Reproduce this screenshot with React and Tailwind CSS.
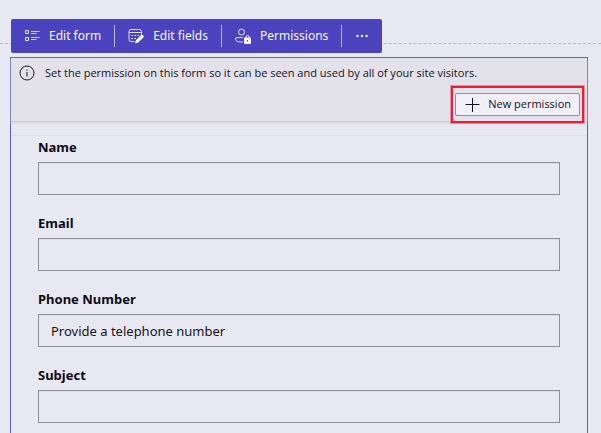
const fields = [
  { id: "name", label: "Name", type: "text", value: "" },
  { id: "email", label: "Email", type: "email", value: "" },
  { id: "phone", label: "Phone Number", type: "tel", value: "Provide a telephone number" },
  { id: "subject", label: "Subject", type: "text", value: "" },
];

function FormIcon() {
  return (
    <svg width="16" height="16" viewBox="0 0 16 16" fill="none" stroke="currentColor" aria-hidden="true">
      <rect x="1.5" y="2.5" width="3" height="3" rx="0.5" />
      <rect x="1.5" y="9.5" width="3" height="3" rx="0.5" />
      <path d="M7 3.5h8.5M7 5.5h5.5M7 9.5h8.5M7 11.500h5.5" strokeOpacity="0.75" />
    </svg>
  );
}

function FieldsIcon() {
  return (
    <svg width="16" height="16" viewBox="0 0 16 16" fill="none" stroke="currentColor" aria-hidden="true">
      <path d="M6.5 13.5H3a2 2 0 0 1-2-2v-8a2 2 0 0 1 2-2h8.5a2 2 0 0 1 2 2V7M1 4.5h12.5" strokeOpacity="0.85" />
      <path d="M3.5 7.5H5M6.5 7.5H8M9.5 7.5H11M3.5 10.5H5M6.5 10.5H8" />
      <path d="M12.6 7.5a1.6 1.6 0 0 1 2.6 2.3L10.2 14.4l-3.2 1 .9-3.1z" fill="currentColor" stroke="none" />
    </svg>
  );
}

function PermissionsIcon() {
  return (
    <svg width="16" height="16" viewBox="0 0 16 16" fill="none" stroke="currentColor" aria-hidden="true">
      <circle cx="6.5" cy="4" r="3" strokeOpacity="0.85" />
      <path d="M8 9.5H2A1.5 1.5 0 0 0 .5 11c0 2 2.5 3 5.5 3h2" strokeOpacity="0.85" />
      <path d="M11 10V9a1.5 1.5 0 0 1 3 0v1" />
      <path
        fillRule="evenodd"
        d="M10 9.5h5a1 1 0 0 1 1 1V15a1 1 0 0 1-1 1h-5a1 1 0 0 1-1-1v-4.5a1 1 0 0 1 1-1zm2 2.5v1.5h1V12z"
        fill="currentColor"
        stroke="none"
      />
    </svg>
  );
}

function InfoIcon() {
  return (
    <svg width="16" height="16" viewBox="0 0 16 16" fill="none" stroke="currentColor" aria-hidden="true">
      <circle cx="8" cy="8" r="7" />
      <path d="M8 7v4.5M8 4.5v1.2" />
    </svg>
  );
}

function ToolbarButton({ icon, children }) {
  return (
    <button type="button" className="flex h-full items-center gap-[9px] px-[13px] text-[12px] whitespace-nowrap">
      {icon}
      {children}
    </button>
  );
}

function Divider() {
  return <span className="h-[22px] w-px bg-[#b9b2d8]" />;
}

export default function App() {
  return (
    <main className="h-screen overflow-hidden bg-[#e8e8f2] pt-[19px] font-['Noto_Sans','Open_Sans',sans-serif] text-[#15131c]">
      <div className="relative mb-1 flex pl-[11px]">
        <div className="absolute inset-x-0 top-6 border-t border-dashed border-[#b9b8c3]" />
        <div role="toolbar" className="relative flex h-[34px] items-center rounded-[2px] bg-[#4b43bd] text-[#f6f5ff]">
          <ToolbarButton icon={<FormIcon />}>Edit form</ToolbarButton>
          <Divider />
          <ToolbarButton icon={<FieldsIcon />}>Edit fields</ToolbarButton>
          <Divider />
          <ToolbarButton icon={<PermissionsIcon />}>Permissions</ToolbarButton>
          <Divider />
          <button type="button" aria-label="More options" className="flex h-full items-center px-[13px]">
            <svg width="14" height="16" viewBox="0 0 14 16" fill="currentColor" aria-hidden="true">
              <circle cx="2.5" cy="8" r="1.2" />
              <circle cx="7" cy="8" r="1.2" />
              <circle cx="11.5" cy="8" r="1.2" />
            </svg>
          </button>
        </div>
      </div>

      <section className="mr-[13px] ml-[10px] h-full border border-[#6159c4]">
        <div className="border-b border-[#cbcad3] bg-[#e3e2eb] px-[7px] pt-[7px] pb-[5px] font-['Open_Sans',sans-serif] text-[11px] shadow-[0_1px_2px_#d5d4de]">
          <div className="flex items-center gap-[10px] pl-px">
            <InfoIcon />
            <p className="leading-4 whitespace-nowrap">
              Set the permission on this form so it can be seen and used by all of your site visitors.
            </p>
          </div>
          <div className="mt-3 flex justify-end">
            <div className="relative">
              <button
                type="button"
                className="flex h-[23px] items-center gap-2 rounded-[2px] border border-[#92919c] bg-[#f0effa] px-2 whitespace-nowrap"
              >
                <svg width="16" height="16" viewBox="0 0 16 16" stroke="currentColor" aria-hidden="true">
                  <path d="M1.5 7.5h14M8.5 1v14" />
                </svg>
                New permission
              </button>
              <div className="pointer-events-none absolute -inset-x-[4px] -inset-y-[7px] border-2 border-[#ee1c37] shadow-[0_0_0_1px_#ee1c3766]" />
            </div>
          </div>
        </div>

        <form className="mt-[13px] border-t border-[#e1e0e9] px-[27px] pt-px">
          {fields.map((field) => (
            <div key={field.id} className="mb-[18px]">
              <label htmlFor={field.id} className="block pb-[5px] text-[13px] leading-5 font-bold text-[#0c0a12]">
                {field.label}
              </label>
              <input
                id={field.id}
                type={field.type}
                defaultValue={field.value}
                className="block h-[33px] w-full border border-[#8f8e9a] bg-transparent px-3 text-[13px] shadow-[inset_0_1px_1px_#dcdbe6] outline-none"
              />
            </div>
          ))}
        </form>
      </section>
    </main>
  );
}
